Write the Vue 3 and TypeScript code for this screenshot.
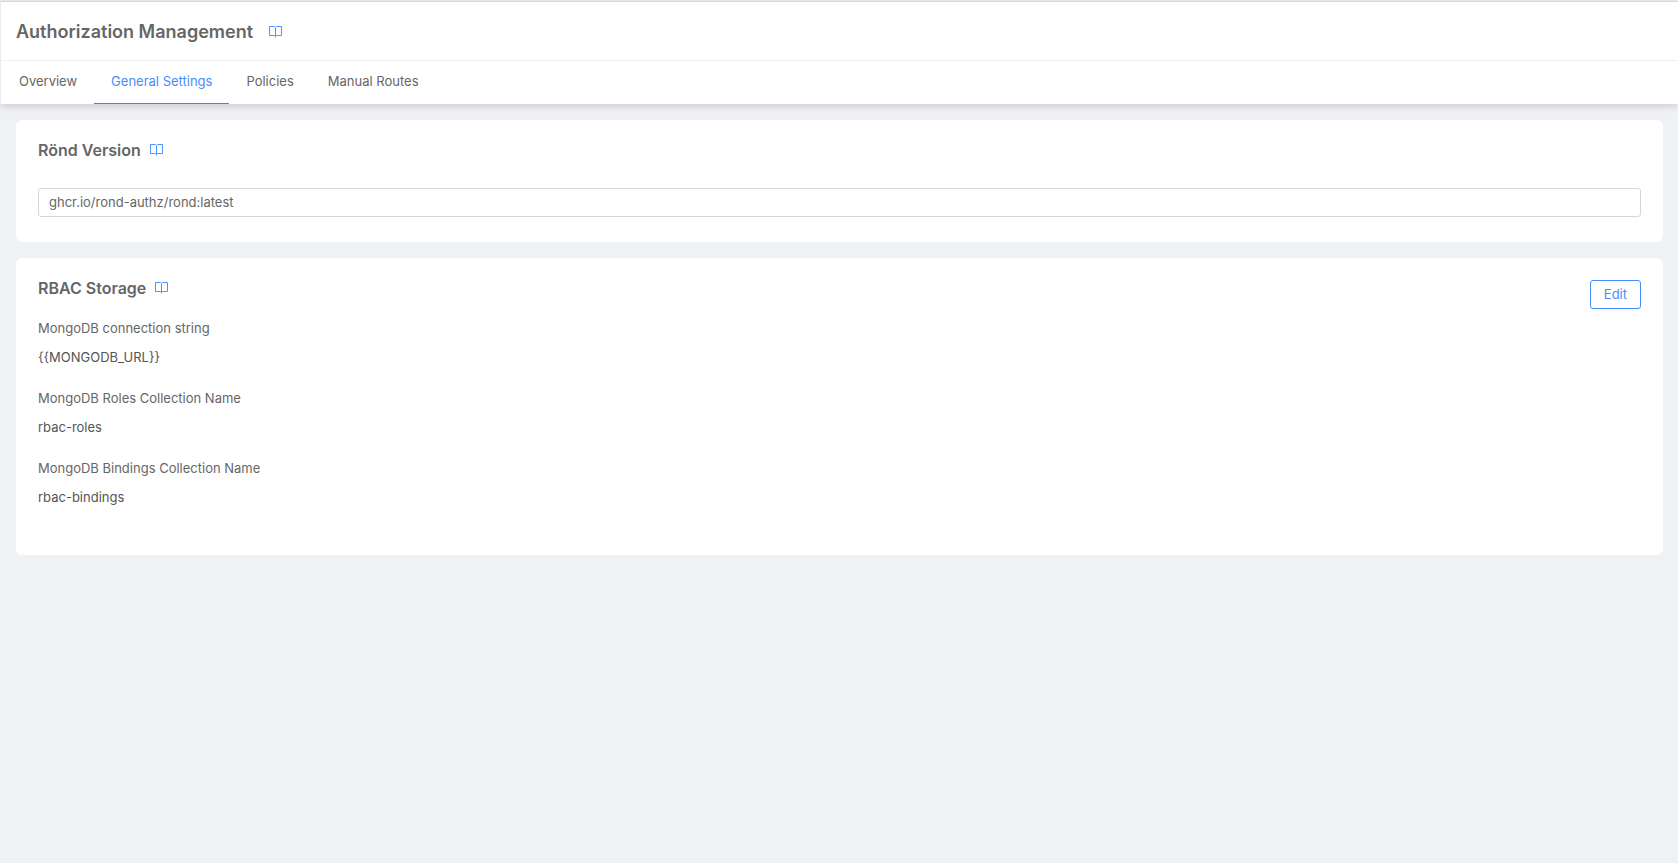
<script setup lang="ts">
import { ref } from 'vue'

interface Field {
  label: string
  value: string
}

const tabs: string[] = ['Overview', 'General Settings', 'Policies', 'Manual Routes']
const activeTab = ref('General Settings')
const image = ref('ghcr.io/rond-authz/rond:latest')

const fields: Field[] = [
  { label: 'MongoDB connection string', value: '{{MONGODB_URL}}' },
  { label: 'MongoDB Roles Collection Name', value: 'rbac-roles' },
  { label: 'MongoDB Bindings Collection Name', value: 'rbac-bindings' },
]
</script>

<template>
  <div class="page">
    <header class="header">
      <div class="title-bar">
        <h1>Authorization Management</h1>
        <a class="docs" href="#" aria-label="Authorization documentation">
          <svg viewBox="0 0 14 14"><path d="M6.5 2.5L5.5 1.5H.5v9h5l1 1M6.5 2.5l1-1h5v9h-5l-1 1M6.5 2.5v10" /></svg>
        </a>
      </div>
      <nav class="tabs">
        <button
          v-for="tab in tabs"
          :key="tab"
          type="button"
          class="tab"
          :class="{ active: tab === activeTab }"
          @click="activeTab = tab"
        >{{ tab }}</button>
      </nav>
    </header>

    <main class="content">
      <section class="card">
        <div class="heading">
          <h2 id="version-title">Rönd Version</h2>
          <a class="docs" href="#" aria-label="Version documentation">
            <svg viewBox="0 0 14 14"><path d="M6.5 2.5L5.5 1.5H.5v9h5l1 1M6.5 2.5l1-1h5v9h-5l-1 1M6.5 2.5v10" /></svg>
          </a>
        </div>
        <input v-model="image" class="version" type="text" aria-labelledby="version-title" />
      </section>

      <section class="card storage">
        <div class="details">
          <div class="heading">
            <h2>RBAC Storage</h2>
            <a class="docs" href="#" aria-label="Storage documentation">
              <svg viewBox="0 0 14 14"><path d="M6.5 2.5L5.5 1.5H.5v9h5l1 1M6.5 2.5l1-1h5v9h-5l-1 1M6.5 2.5v10" /></svg>
            </a>
          </div>
          <dl>
            <div v-for="field in fields" :key="field.label" class="field">
              <dt>{{ field.label }}</dt>
              <dd>{{ field.value }}</dd>
            </div>
          </dl>
        </div>
        <button type="button" class="edit">Edit</button>
      </section>
    </main>
  </div>
</template>

<style>
body {
  background: #f0f1f5;
}
</style>

<style scoped>
.page {
  box-sizing: border-box;
  min-height: 100vh;
  padding-top: 1px;
  color: #666;
  font-family: Inter, sans-serif;
  font-size: 13px;
  line-height: 20px;
}

h1,
h2,
dl,
dd {
  margin: 0;
}

.header {
  border-top: 1px solid #d8d8de;
  border-left: 1px solid #ececf0;
  background: #fff;
  box-shadow: 0 2px 8px rgba(0, 0, 0, 0.16);
}

.title-bar {
  display: flex;
  align-items: center;
  gap: 16px;
  height: 56px;
  padding: 2px 15px 0;
  border-bottom: 1px solid #f0f0f0;
}

h1 {
  font-size: 18px;
  font-weight: 600;
  line-height: 28px;
}

.docs {
  display: block;
  width: 14px;
  height: 14px;
}

.docs svg {
  display: block;
  width: 14px;
  height: 14px;
  fill: none;
  stroke: #4a94ff;
}

.tabs {
  display: flex;
  padding-left: 1px;
}

.tab {
  height: 43px;
  padding: 0 17px 2px;
  border: 0;
  border-bottom: 1px solid transparent;
  background: none;
  color: #666;
  font: inherit;
  cursor: pointer;
}

.tab.active {
  border-color: #3d84f7;
  color: #478cff;
}

.content {
  display: flex;
  flex-direction: column;
  gap: 16px;
  padding: 16px 15px 16px 16px;
}

.card {
  padding: 18px 22px 25px;
  border-radius: 6px;
  background: #fff;
}

.heading {
  display: flex;
  align-items: center;
  gap: 9px;
}

h2 {
  font-size: 16px;
  font-weight: 600;
  line-height: 24px;
}

.version {
  display: block;
  box-sizing: border-box;
  width: 100%;
  height: 29px;
  margin-top: 26px;
  padding: 0 10px 2px;
  border: 1px solid #d6d6d6;
  border-radius: 3px;
  background: #fff;
  color: #666;
  font: inherit;
}

.storage {
  display: flex;
  justify-content: space-between;
  align-items: flex-start;
}

dl {
  display: flex;
  flex-direction: column;
  gap: 21px;
  padding: 18px 0 23px;
}

.field {
  display: flex;
  flex-direction: column;
  gap: 9px;
}

dd {
  color: #555;
}

.edit {
  height: 29px;
  margin-top: 4px;
  padding: 0 13px 2px;
  border: 1px solid #478cff;
  border-radius: 3px;
  background: #fff;
  box-shadow: 0 2px 0 rgba(0, 0, 0, 0.02);
  color: #478cff;
  font: inherit;
  cursor: pointer;
}
</style>
